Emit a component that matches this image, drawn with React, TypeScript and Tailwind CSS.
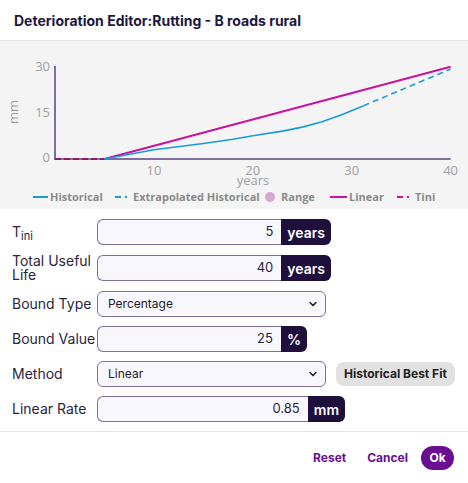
import { ChevronDown } from "lucide-react";

const X = (t: number) => 55 + t * 9.89;
const Y = (v: number) => 118 - v * 3.1;

const historical = [
  [5, 0],
  [10, 3],
  [15, 5],
  [18, 6.4],
  [20, 7.5],
  [23, 9],
  [25, 10.3],
  [27, 12],
  [29, 14.3],
  [31.2, 17.2],
];

const toPath = (pts: number[][]) =>
  pts.map(([t, v], i) => `${i ? "L" : "M"}${X(t).toFixed(1)} ${Y(v).toFixed(1)}`).join(" ");

function Chart() {
  const label = "fill-[#a0a0a0] text-[13px]";
  const legend = "fill-[#8a8a8a] text-[11px] font-bold";
  return (
    <div className="h-[168px] bg-[#f4f4f4]">
      <svg width="468" height="168" className="font-['Open_Sans',sans-serif]">
        {/* axes */}
        <line x1="55" y1="25" x2="55" y2="119" stroke="#7f6fa0" strokeWidth="2" />
        <line x1="54" y1="118" x2={X(40)} y2="118" stroke="#7f6fa0" strokeWidth="2" />
        <text x="50" y="30" textAnchor="end" className={label}>30</text>
        <text x="50" y="76" textAnchor="end" className={label}>15</text>
        <text x="50" y="121" textAnchor="end" className={label}>0</text>
        {[10, 20, 30, 40].map((t) => (
          <text key={t} x={X(t)} y="134" textAnchor="middle" className={label}>
            {t}
          </text>
        ))}
        <text x="253" y="144" textAnchor="middle" className={label}>years</text>
        <text x="18" y="71" textAnchor="middle" transform="rotate(-90 18 71)" className={label}>
          mm
        </text>

        {/* series */}
        <line x1="55" y1="118" x2={X(5)} y2="118" stroke="#8b1a6b" strokeWidth="2" strokeDasharray="6 3" />
        <line x1={X(5)} y1="118" x2={X(40)} y2={Y(29.75)} stroke="#c8139e" strokeWidth="2" />
        <path d={toPath(historical)} fill="none" stroke="#1a9ad6" strokeWidth="1.6" />
        <path d={toPath([[31.2, 17.2], [40, 29]])} fill="none" stroke="#1a9ad6" strokeWidth="1.6" strokeDasharray="6 4" />

        {/* legend */}
        <line x1="33" y1="156" x2="48" y2="156" stroke="#1a9ad6" strokeWidth="2" />
        <text x="50" y="160" className={legend}>Historical</text>
        <line x1="115" y1="156" x2="121" y2="156" stroke="#1a9ad6" strokeWidth="2" />
        <line x1="125" y1="156" x2="127" y2="156" stroke="#1a9ad6" strokeWidth="2" />
        <text x="133" y="160" className={legend}>Extrapolated Historical</text>
        <circle cx="270" cy="156" r="5" fill="#d6a8d2" />
        <text x="281" y="160" className={legend}>Range</text>
        <line x1="330" y1="156" x2="347" y2="156" stroke="#c8139e" strokeWidth="2" />
        <text x="349" y="160" className={legend}>Linear</text>
        <line x1="397" y1="156" x2="403" y2="156" stroke="#c8139e" strokeWidth="2" />
        <line x1="407" y1="156" x2="409" y2="156" stroke="#c8139e" strokeWidth="2" />
        <text x="415" y="160" className={legend}>Tini</text>
      </svg>
    </div>
  );
}

function NumberField({ value, unit, width }: { value: string; unit: string; width: string }) {
  return (
    <div className={`flex h-[26px] shrink-0 ${width}`}>
      <input
        readOnly
        value={value}
        className="min-w-0 flex-1 rounded-l-md border border-r-0 border-[#7f6fa0] bg-[#f7f7fd] px-2 text-right text-[13px] text-[#2b2540] outline-none"
      />
      <span className="flex items-center rounded-r-md bg-[#1f0f3d] px-[6px] text-[14px] font-semibold text-white">
        {unit}
      </span>
    </div>
  );
}

function SelectField({ value }: { value: string }) {
  return (
    <div className="flex h-[26px] w-[229px] shrink-0 items-center justify-between rounded-md border border-[#7f6fa0] bg-[#f7f7fd] pl-[10px] pr-[6px] text-[12px] text-[#1d1a2c]">
      <span>{value}</span>
      <ChevronDown size={12} strokeWidth={3} />
    </div>
  );
}

function Row({ label, children }: { label: React.ReactNode; children: React.ReactNode }) {
  return (
    <div className="flex items-center">
      <div className="w-[85px] shrink-0 text-[14px] leading-[14px] text-[#2b2540]">{label}</div>
      {children}
    </div>
  );
}

export default function App() {
  return (
    <div className="h-[483px] w-[468px] bg-white font-['Inter',sans-serif]">
      <div className="flex h-[41px] items-center border-b border-[#e6e6e6] px-[14px]">
        <h1 className="text-[14px] font-bold text-[#1d1640]">
          Deterioration Editor:Rutting - B roads rural
        </h1>
      </div>
      <Chart />
      <div className="flex flex-col gap-[9px] border-b border-[#e6e6e6] px-3 pb-[9px] pt-[10px]">
        <Row
          label={
            <span>
              T<sub className="text-[11px]">ini</sub>
            </span>
          }
        >
          <NumberField value="5" unit="years" width="w-[234px]" />
        </Row>
        <Row label="Total Useful Life">
          <NumberField value="40" unit="years" width="w-[234px]" />
        </Row>
        <Row label="Bound Type">
          <SelectField value="Percentage" />
        </Row>
        <Row label="Bound Value">
          <NumberField value="25" unit="%" width="w-[210px]" />
        </Row>
        <Row label="Method">
          <SelectField value="Linear" />
          <button className="ml-[10px] h-[24px] shrink-0 whitespace-nowrap rounded-lg bg-[#e1e1e1] px-[8px] text-[12px] font-bold text-[#222]">
            Historical Best Fit
          </button>
        </Row>
        <Row label="Linear Rate">
          <NumberField value="0.85" unit="mm" width="w-[248px]" />
        </Row>
      </div>
      <div className="flex items-center justify-end gap-[21px] px-[14px] pt-[14px]">
        <button className="text-[12px] font-bold text-[#6a0d91]">Reset</button>
        <button className="text-[12px] font-bold text-[#6a0d91]">Cancel</button>
        <button className="-ml-[8px] h-[24px] w-[33px] rounded-full bg-[#6a0d91] text-[12px] font-bold text-white">Ok</button>
      </div>
    </div>
  );
}
